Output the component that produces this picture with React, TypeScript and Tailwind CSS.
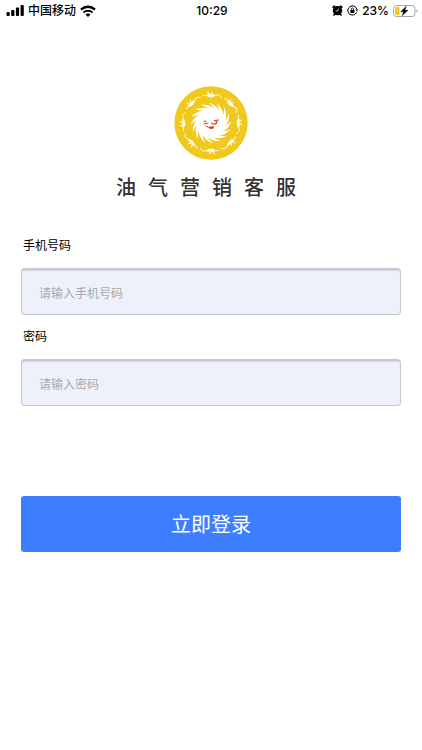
import { useState } from "react"
import type { FormEvent } from "react"

const CENTER = 37

// curved feather of the phoenix wheel, rotated around the center
const feather = "M46 31 C43 23 36 18 27 19 C33 20.5 37 24 38 29 Z"
const featherAngles = Array.from({ length: 16 }, (_, i) => i * 22.5)
const birdAngles = [0, 45, 90, 135, 180, 225, 270, 315]

function SignalIcon() {
    return (
        <svg className="h-[11px] w-[18px]" viewBox="0 0 18 11" fill="currentColor" aria-hidden="true">
            <rect x="0.5" y="7" width="3.2" height="4" rx="0.9" />
            <rect x="5.2" y="5" width="3.2" height="6" rx="0.9" />
            <rect x="9.9" y="2.5" width="3.2" height="8.5" rx="0.9" />
            <rect x="14.6" y="0" width="3.2" height="11" rx="0.9" />
        </svg>
    )
}

function WifiIcon() {
    return (
        <svg className="h-3 w-4" viewBox="0 0 16 12" aria-hidden="true">
            <path d="M1 4.6 C5 0.8 11 0.8 15 4.6" fill="none" stroke="currentColor" strokeWidth="2.3" />
            <path d="M3.5 7.4 C6 5.1 10 5.1 12.5 7.4" fill="none" stroke="currentColor" strokeWidth="2.1" />
            <path d="M8 12 L5.5 9.5 C6.8 8.3 9.2 8.3 10.5 9.5 Z" fill="currentColor" />
        </svg>
    )
}

function AlarmIcon() {
    return (
        <svg className="h-[11px] w-[11px]" viewBox="0 0 11 11" aria-hidden="true">
            <circle cx="5.5" cy="5.6" r="4.7" fill="currentColor" />
            <path d="M1.2 2.2 L2.4 1.2 M9.8 2.2 L8.6 1.2 M2 10 L3 9 M9 10 L8 9" stroke="currentColor" strokeWidth="1.7" strokeLinecap="round" />
            <path d="M6.6 3.6 L5.6 6 H3.8" fill="none" stroke="white" strokeWidth="0.7" />
        </svg>
    )
}

function RotationLockIcon() {
    return (
        <svg className="h-[11px] w-[11px]" viewBox="0 0 11 11" aria-hidden="true">
            <path d="M9.6 7.4 A4.6 4.6 0 1 1 9.9 4.4" fill="none" stroke="currentColor" strokeWidth="1" />
            <path d="M8.4 4.4 H11 L10 6.4 Z" fill="currentColor" />
            <rect x="3.4" y="5" width="4" height="2.9" rx="0.4" fill="currentColor" />
            <path d="M4.3 5 V4.1 A1.1 1.1 0 0 1 6.5 4.1 V5" fill="none" stroke="currentColor" strokeWidth="0.8" />
        </svg>
    )
}

function BatteryIcon() {
    return (
        <svg className="h-3 w-[25px]" viewBox="0 0 25 12" aria-hidden="true">
            <rect x="0.5" y="0.5" width="21.5" height="11" rx="3" fill="white" stroke="#a6a6a6" />
            <rect x="2" y="2" width="4.6" height="8" rx="1.5" fill="#fbc81f" />
            <path d="M13.2 1.2 L7.8 6.8 H10.6 L9.2 10.8 L15 5.2 H11.9 Z" fill="black" stroke="black" strokeWidth="0.4" />
            <path d="M23.4 4.2 C25 4.8 25 7.2 23.4 7.8 Z" fill="#a6a6a6" />
        </svg>
    )
}

function Logo() {
    return (
        <svg className="h-[74px] w-[74px]" viewBox="0 0 74 74" role="img" aria-label="油气营销客服">
            <circle cx={CENTER} cy={CENTER} r="36.7" fill="#f0c81e" />
            {birdAngles.map((angle) => (
                <g key={angle} transform={`rotate(${angle} ${CENTER} ${CENTER})`} fill="none" stroke="#fffbe0" strokeLinecap="round">
                    <path d="M29 9.5 C31 10.5 33 8.5 36 8.5 C39 8.5 41 10 43 9 C45 8.4 46.5 9.5 47.5 11.5" strokeWidth="1" />
                    <path d="M34 9.5 C36 10.8 38 10.4 40 9.4" strokeWidth="2.2" />
                    <path d="M35 8.5 L34 6.2 M37 8.5 L38.2 6.6" strokeWidth="1.2" />
                </g>
            ))}
            <circle cx={CENTER} cy={CENTER} r="11.5" fill="white" />
            {featherAngles.map((angle) => (
                <path key={angle} d={feather} fill="white" transform={`rotate(${angle} ${CENTER} ${CENTER})`} />
            ))}
            <path d="M37.5 37 C38.5 38.5 41 38.5 42.5 37 C43.5 35.5 42 35 41 34.5 L44.5 34" fill="none" stroke="#d9371f" strokeWidth="1.2" strokeLinecap="round" />
            <path d="M34 41 L40 40 L39.5 42.5 L36 43 Z" fill="#d9371f" />
            <path d="M30 35.5 L32 35 M30 38 L34 37 M32 40 L34 41" stroke="#d9371f" strokeWidth="1" strokeLinecap="round" />
        </svg>
    )
}

const labelStyle = "block h-8 px-[2px] text-xs leading-5"
const inputStyle = "h-[47px] w-full rounded border border-t-2 border-[#c6c7d0] bg-[#eef1fa] px-[17px] pt-[2px] text-xs text-[#333333] shadow-[inset_0_1px_1px_#d5d7e2] outline-none placeholder:text-[#aaaaaa]"

export default function App() {
    const [phone, setPhone] = useState("")
    const [password, setPassword] = useState("")

    const onSubmit = (event: FormEvent) => {
        event.preventDefault()
    }

    return (
        <div className="min-h-screen bg-white font-['Inter','Noto_Sans_CJK_SC',sans-serif] text-black">
            <header className="grid h-[21px] grid-cols-[1fr_auto_1fr] items-center pl-[6px] pr-1 text-xs font-medium">
                <div className="flex items-center gap-1">
                    <SignalIcon />
                    <span>中国移动</span>
                    <WifiIcon />
                </div>
                <time>10:29</time>
                <div className="flex items-center justify-end gap-1">
                    <AlarmIcon />
                    <RotationLockIcon />
                    <span>23%</span>
                    <BatteryIcon />
                </div>
            </header>
            <main className="px-[21px] pt-[65px]">
                <div className="flex justify-center">
                    <Logo />
                </div>
                <h1 className="mt-3 flex h-8 items-center justify-center gap-3 pr-[10px] text-xl font-medium text-[#333333]">
                    {Array.from("油气营销客服").map((char) => (
                        <span key={char}>{char}</span>
                    ))}
                </h1>
                <form onSubmit={onSubmit} className="mt-8">
                    <label htmlFor="phone" className={labelStyle}>手机号码</label>
                    <input
                        id="phone"
                        type="tel"
                        placeholder="请输入手机号码"
                        value={phone}
                        onChange={(e) => setPhone(e.target.value)}
                        className={inputStyle}
                    />
                    <label htmlFor="password" className={`mt-3 ${labelStyle}`}>密码</label>
                    <input
                        id="password"
                        type="password"
                        placeholder="请输入密码"
                        value={password}
                        onChange={(e) => setPassword(e.target.value)}
                        className={inputStyle}
                    />
                    <button type="submit" className="mt-[90px] h-14 w-full rounded-[3px] bg-[#3d7eff] pt-[2px] text-xl text-white">
                        立即登录
                    </button>
                </form>
            </main>
        </div>
    )
}
